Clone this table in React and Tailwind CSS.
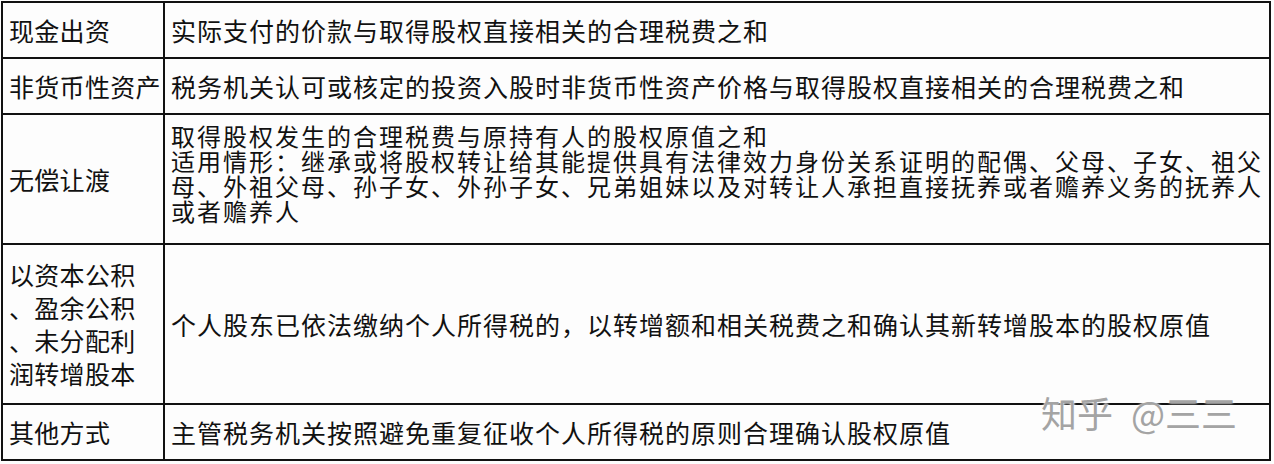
const rows = [
  { label: ["现金出资"], body: ["实际支付的价款与取得股权直接相关的合理税费之和"], h: "h-[56px]" },
  { label: ["非货币性资产"], body: ["税务机关认可或核定的投资入股时非货币性资产价格与取得股权直接相关的合理税费之和"], h: "h-[56px]" },
  {
    label: ["无偿让渡"],
    body: [
      "取得股权发生的合理税费与原持有人的股权原值之和",
      "适用情形：继承或将股权转让给其能提供具有法律效力身份关系证明的配偶、父母、子女、祖父",
      "母、外祖父母、孙子女、外孙子女、兄弟姐妹以及对转让人承担直接抚养或者赡养义务的抚养人",
      "或者赡养人",
    ],
    h: "h-[130px]",
    top: true,
  },
  { label: ["以资本公积", "、盈余公积", "、未分配利", "润转增股本"], body: ["个人股东已依法缴纳个人所得税的，以转增额和相关税费之和确认其新转增股本的股权原值"], h: "h-[160px]" },
  { label: ["其他方式"], body: ["主管税务机关按照避免重复征收个人所得税的原则合理确认股权原值"], h: "h-[56px]" },
];

export default function App() {
  return (
    <div className="relative w-[1274px] h-[464px] bg-[#fdfdfd] overflow-hidden pl-[1px] pt-[1px]"
      style={{ fontFamily: '"Noto Sans CJK SC", "Noto Sans", sans-serif' }}>
      <table className="w-[1270px] border-collapse border-2 border-[#111] text-[#111] text-[25px]">
        <tbody>
          {rows.map((r, i) => (
            <tr key={i} className={r.h}>
              <td className="w-[162px] border-2 border-[#111] pl-[6px] pr-0 align-middle leading-[33px] tracking-[0.3px] whitespace-nowrap">
                {r.label.map((l, j) => <div key={j}>{l}</div>)}
              </td>
              <td className={`border-2 border-[#111] pl-[6px] whitespace-nowrap leading-[25px] ${r.top ? "align-top pt-[8px] text-[24px] tracking-[2px]" : "align-middle tracking-[1px]"}`}>
                {r.body.map((l, j) => <div key={j}>{l}</div>)}
              </td>
            </tr>
          ))}
        </tbody>
      </table>

      {/* zhihu watermark */}
      <div className="absolute left-[1041px] top-[394px] flex items-center gap-[18px] text-[36px] text-[#a4a4a4] leading-none [text-shadow:0_0_3px_#fff,0_0_2px_#fff]">
        <span>知乎</span>
        <span>@三三</span>
      </div>
    </div>
  );
}
